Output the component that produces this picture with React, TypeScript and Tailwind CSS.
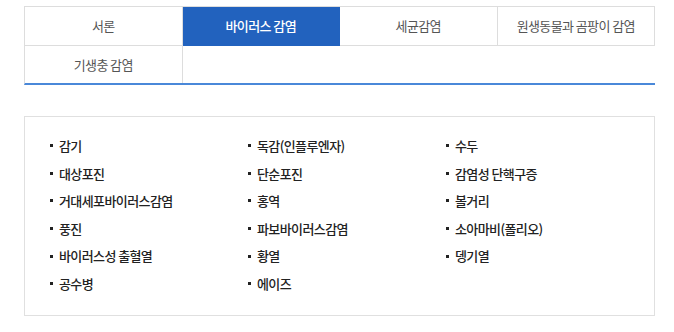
const tabs = ["서론", "바이러스 감염", "세균감염", "원생동물과 곰팡이 감염", "기생충 감염"];

const diseases = [
  "감기",
  "독감(인플루엔자)",
  "수두",
  "대상포진",
  "단순포진",
  "감염성 단핵구증",
  "거대세포바이러스감염",
  "홍역",
  "볼거리",
  "풍진",
  "파보바이러스감염",
  "소아마비(폴리오)",
  "바이러스성 출혈열",
  "황열",
  "뎅기열",
  "공수병",
  "에이즈",
];

export default function App() {
  return (
    <div
      className="w-[674px] h-[332px] bg-white px-[24px] pt-[6px] tracking-[-0.6px]"
      style={{ fontFamily: '"Noto Sans CJK KR", "Noto Sans", sans-serif' }}
    >
      <div className="grid grid-cols-4 w-[631px] border-t border-l border-[#dddddd] border-b-2 border-b-[#4a88d9]">
        {tabs.map((t, i) => {
          const active = i === 1;
          const lastRow = i === 4;
          return (
            <div
              key={t}
              className={
                "flex items-center justify-center text-[13px] border-r " +
                (lastRow ? "h-[37px] border-[#dddddd] " : "h-[39px] border-b ") +
                (active
                  ? "bg-[#2262be] border-[#2262be] text-white font-medium"
                  : lastRow
                  ? "text-[#555555]"
                  : "border-[#dddddd] text-[#555555]")
              }
            >
              {t}
            </div>
          );
        })}
      </div>

      <div className="mt-[31px] w-[631px] h-[200px] border border-[#e0e0e0] pl-[25px] pt-[15px]">
        <ul className="grid grid-cols-[198px_198px_1fr]">
          {diseases.map((d) => (
            <li key={d} className="flex items-center h-[27.6px] text-[13px] font-medium text-[#222222]">
              <span className="w-[3px] h-[3px] bg-[#222222] mr-[6px]" />
              {d}
            </li>
          ))}
        </ul>
      </div>
    </div>
  );
}
